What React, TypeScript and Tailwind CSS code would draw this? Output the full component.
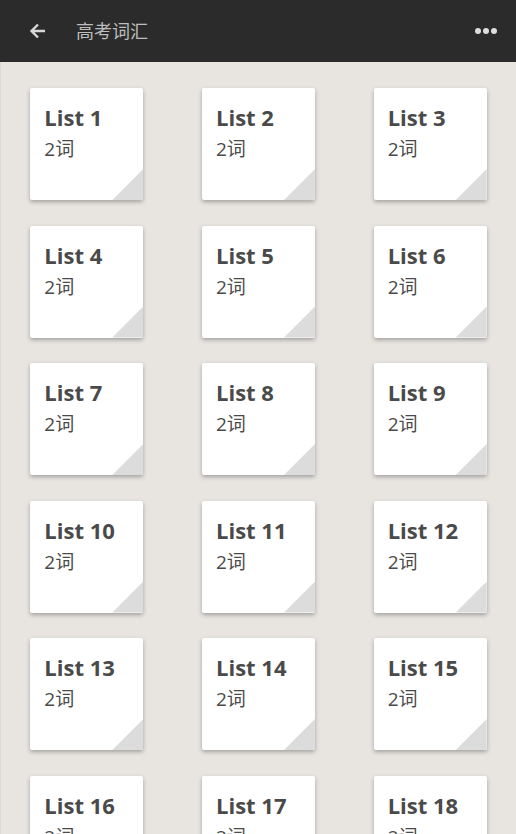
import React from "react";

const lists = Array.from({ length: 18 }, (_, i) => i + 1);

function ListCard({ n }: { n: number }) {
  return (
    <div className="relative w-[113px] h-[112px] bg-white rounded-[2px] shadow-[0_2px_4px_rgba(0,0,0,0.3)] overflow-hidden px-[14px] pt-[13px]">
      <div className="text-[22px] leading-[32px] font-bold text-[#4a4a4a]">List {n}</div>
      <div className="mt-[1px] text-[19px] leading-[30px] text-[#4a4a4a]">2词</div>
      {/* folded corner */}
      <div className="absolute right-0 bottom-0 w-[31px] h-[31px] bg-[#dcdcdc] [clip-path:polygon(100%_0,100%_100%,0_100%)]" />
    </div>
  );
}

export default function App() {
  return (
    <div
      className="w-[516px] h-[834px] overflow-hidden bg-[#e8e5e1]"
      style={{ fontFamily: '"Open Sans", "Noto Sans CJK SC", sans-serif' }}
    >
      <header className="h-[62px] bg-[#2b2b2b] flex items-center px-[29px]">
        <svg width="18" height="18" viewBox="0 0 18 18" className="text-[#d8d8d8]">
          <path d="M16 9H3M9 2.5L2.5 9 9 15.5" fill="none" stroke="currentColor" strokeWidth="2.4" />
        </svg>
        <h1 className="ml-[29px] text-[18px] text-[#bdbdbd] font-normal">高考词汇</h1>
        <div className="ml-auto mr-[-10px] flex gap-[2px]">
          <span className="w-[6px] h-[6px] rounded-full bg-[#dedede]" />
          <span className="w-[6px] h-[6px] rounded-full bg-[#dedede]" />
          <span className="w-[6px] h-[6px] rounded-full bg-[#dedede]" />
        </div>
      </header>
      <main className="grid grid-cols-3 gap-y-[25.5px] pt-[26px] border-l border-[#dcd9d5]">
        {lists.map((n) => (
          <div key={n} className="flex justify-center">
            <ListCard n={n} />
          </div>
        ))}
      </main>
    </div>
  );
}
